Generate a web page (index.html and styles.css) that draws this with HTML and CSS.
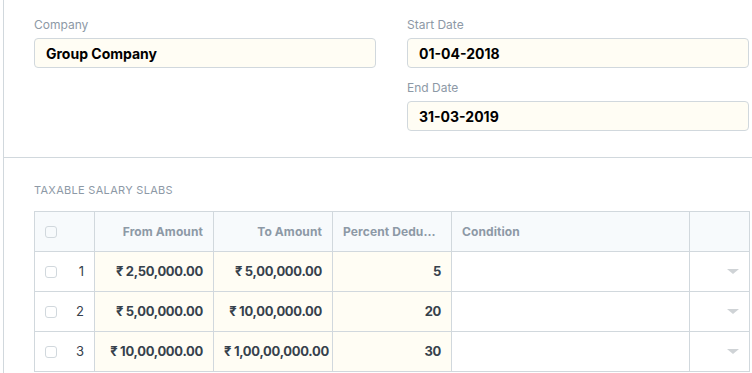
FILE: index.html
```html
<!DOCTYPE html>
<html lang="en">
<head>
    <meta charset="UTF-8">
    <meta name="viewport" content="width=device-width, initial-scale=1.0">
    <title>Income Tax Slab</title>
    <link rel="stylesheet" href="styles.css">
</head>
<body>

    <div class="page">

        <div class="form-section">
            <div class="form-column">
                <div class="field">
                    <label class="field-label">Company</label>
                    <div class="field-input">Group Company</div>
                </div>
            </div>
            <div class="form-column">
                <div class="field">
                    <label class="field-label">Start Date</label>
                    <div class="field-input">01-04-2018</div>
                </div>
                <div class="field">
                    <label class="field-label">End Date</label>
                    <div class="field-input">31-03-2019</div>
                </div>
            </div>
        </div>

        <div class="table-section">
            <div class="section-label">Taxable Salary Slabs</div>

            <div class="grid">
                <div class="grid-row grid-head">
                    <div class="cell cell-index"><span class="check"></span></div>
                    <div class="cell cell-num">From Amount</div>
                    <div class="cell cell-num">To Amount</div>
                    <div class="cell cell-num">Percent Deduction</div>
                    <div class="cell">Condition</div>
                    <div class="cell"></div>
                </div>

                <div class="grid-row">
                    <div class="cell cell-index"><span class="check"></span><span class="row-no">1</span></div>
                    <div class="cell cell-num cell-reqd">₹ 2,50,000.00</div>
                    <div class="cell cell-num cell-reqd">₹ 5,00,000.00</div>
                    <div class="cell cell-num cell-reqd">5</div>
                    <div class="cell"></div>
                    <div class="cell cell-menu"><span class="caret"></span></div>
                </div>

                <div class="grid-row">
                    <div class="cell cell-index"><span class="check"></span><span class="row-no">2</span></div>
                    <div class="cell cell-num cell-reqd">₹ 5,00,000.00</div>
                    <div class="cell cell-num cell-reqd">₹ 10,00,000.00</div>
                    <div class="cell cell-num cell-reqd">20</div>
                    <div class="cell"></div>
                    <div class="cell cell-menu"><span class="caret"></span></div>
                </div>

                <div class="grid-row">
                    <div class="cell cell-index"><span class="check"></span><span class="row-no">3</span></div>
                    <div class="cell cell-num cell-reqd">₹ 10,00,000.00</div>
                    <div class="cell cell-num cell-reqd">₹ 1,00,00,000.00</div>
                    <div class="cell cell-num cell-reqd">30</div>
                    <div class="cell"></div>
                    <div class="cell cell-menu"><span class="caret"></span></div>
                </div>
            </div>
        </div>

    </div>

</body>
</html>
```

FILE: styles.css
```css
body {
    margin: 0;
    padding: 0 0 0 3px;
    font-family: Inter, "Liberation Sans", "DejaVu Sans", sans-serif;
    color: #36414c;
    background-color: #fff;
    overflow: hidden;
}

.page {
    border-left: 1px solid #d1d8dd;
    min-height: 373px;
}

.form-section {
    display: grid;
    grid-template-columns: 342px 342px;
    column-gap: 31px;
    padding: 16px 0 26px 30px;
    border-bottom: 1px solid #d1d8dd;
}

.field {
    margin-bottom: 11px;
}

.field:last-child {
    margin-bottom: 0;
}

.field-label {
    display: block;
    font-size: 12px;
    line-height: 18px;
    color: #8d99a6;
    margin-bottom: 4px;
}

.field-input {
    height: 30px;
    box-sizing: border-box;
    border: 1px solid #d1d8dd;
    border-radius: 4px;
    background-color: #fffdf4;
    padding: 0 11px;
    font-size: 14px;
    font-weight: 700;
    line-height: 29px;
    color: #000;
}

.table-section {
    padding: 24px 0 0 30px;
}

.section-label {
    font-size: 11px;
    line-height: 16px;
    text-transform: uppercase;
    color: #8d99a6;
    letter-spacing: 0.3px;
    margin-bottom: 13px;
}

.grid {
    width: 716px;
    box-sizing: border-box;
    border: 1px solid #d1d8dd;
}

.grid-row {
    display: grid;
    grid-template-columns: 59px 119px 119px 119px 238px 60px;
    height: 40px;
    border-top: 1px solid #d1d8dd;
    box-sizing: border-box;
}

.grid-head {
    height: 39px;
    border-top: none;
    background-color: #f7fafc;
}

.cell {
    box-sizing: border-box;
    border-left: 1px solid #d1d8dd;
    padding: 0 10px;
    font-size: 13px;
    font-weight: 700;
    line-height: 39px;
    white-space: nowrap;
    overflow: hidden;
}

.cell-reqd {
    letter-spacing: -0.3px;
    background-color: #fffdf4;
}

.grid-head .cell {
    font-size: 12px;
    color: #8d99a6;
    letter-spacing: 0.1px;
    text-overflow: ellipsis;
}

.cell-num {
    text-align: right;
}

.cell-index {
    border-left: none;
    display: flex;
    align-items: center;
    justify-content: space-between;
    padding: 0 10px 0 10px;
    font-weight: 400;
}

.check {
    display: block;
    width: 12px;
    height: 12px;
    box-sizing: border-box;
    border: 1px solid #d1d8dd;
    border-radius: 3px;
    background-color: #fff;
}

.grid-head .check {
    background-color: #f7fafc;
}

.row-no {
    font-size: 13px;
    line-height: 1;
    color: #36414c;
}

.cell-menu {
    display: flex;
    align-items: center;
    justify-content: flex-end;
    padding-right: 10px;
}

.caret {
    width: 0;
    height: 0;
    border-left: 6px solid transparent;
    border-right: 6px solid transparent;
    border-top: 5px solid #cfd3d6;
}
```
